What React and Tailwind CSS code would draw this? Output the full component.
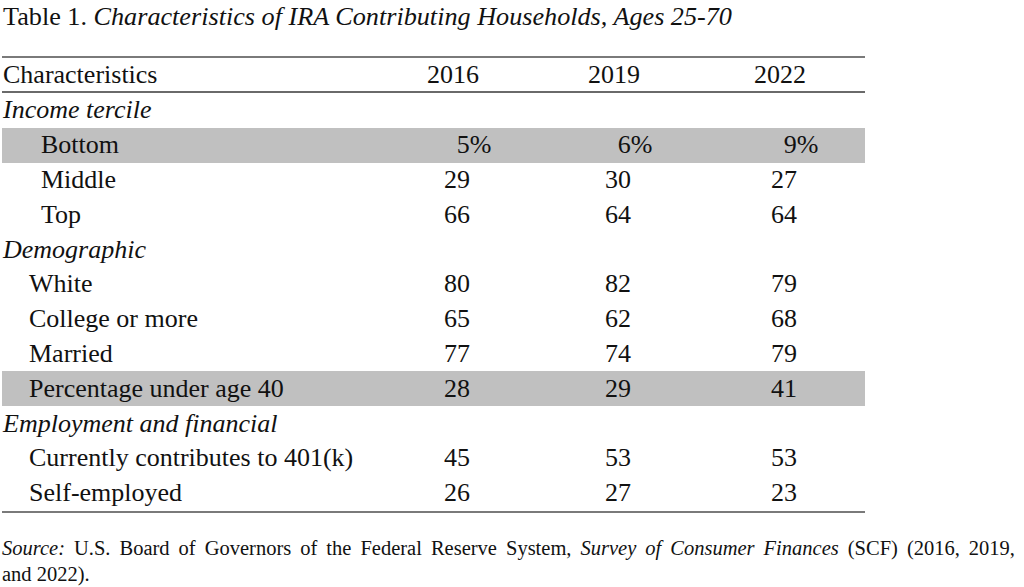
import React from 'react';

const rows = [
  { type: 'group', label: 'Income tercile' },
  { label: 'Bottom', indent: 'pl-[39px]', values: ['5%', '6%', '9%'], shaded: true, pct: true },
  { label: 'Middle', indent: 'pl-[39px]', values: ['29', '30', '27'] },
  { label: 'Top', indent: 'pl-[39px]', values: ['66', '64', '64'] },
  { type: 'group', label: 'Demographic' },
  { label: 'White', indent: 'pl-[27px]', values: ['80', '82', '79'] },
  { label: 'College or more', indent: 'pl-[27px]', values: ['65', '62', '68'] },
  { label: 'Married', indent: 'pl-[27px]', values: ['77', '74', '79'] },
  { label: 'Percentage under age 40', indent: 'pl-[27px]', values: ['28', '29', '41'], shaded: true },
  { type: 'group', label: 'Employment and financial' },
  { label: 'Currently contributes to 401(k)', indent: 'pl-[27px]', values: ['45', '53', '53'] },
  { label: 'Self-employed', indent: 'pl-[27px]', values: ['26', '27', '23'] },
];

const grid = 'grid grid-cols-[371px_160px_162px_170px] items-center';

function Row({ row }) {
  if (row.type === 'group') {
    return (
      <div className={`${grid} h-[34.8px]`}>
        <div className="pl-[1px] italic">{row.label}</div>
      </div>
    );
  }
  return (
    <div className={`${grid} h-[34.8px] ${row.shaded ? 'bg-[#c0c0c0]' : ''}`}>
      <div className={row.indent}>{row.label}</div>
      {row.values.map((v, i) => (
        <div key={i} className={`text-center ${row.pct ? 'pl-[42px]' : 'pl-[8px]'}`}>{v}</div>
      ))}
    </div>
  );
}

export default function App() {
  return (
    <div className="w-[1024px] h-[587px] bg-white text-[#111] font-['Liberation_Serif','Times_New_Roman',serif] overflow-hidden">
      <div className="h-[56px] pl-[3px] pt-[2px] text-[26.2px] leading-[30px]">
        Table 1. <span className="italic">Characteristics of IRA Contributing Households, Ages 25-70</span>
      </div>

      <div className="ml-[2px] w-[863px] text-[26px] leading-[30px]">
        <div className="h-[2px] bg-[#7a7a7a]" />
        <div className={`${grid} h-[33px]`}>
          <div className="pl-[1px]">Characteristics</div>
          <div className="text-center">2016</div>
          <div className="text-center">2019</div>
          <div className="text-center">2022</div>
        </div>
        <div className="h-[2px] bg-[#6a6a6a]" />
        {rows.map((r, i) => (
          <Row key={i} row={r} />
        ))}
        <div className="h-[2px] bg-[#7a7a7a]" />
      </div>

      <div className="mt-[22px] ml-[2px] w-[1013px] text-[20.5px] leading-[26px]">
        <div className="text-justify [text-align-last:justify] whitespace-nowrap">
          <span className="italic">Source:</span> U.S. Board of Governors of the Federal Reserve System,{' '}
          <span className="italic">Survey of Consumer Finances</span> (SCF) (2016, 2019,
        </div>
        <div>and 2022).</div>
      </div>
    </div>
  );
}
